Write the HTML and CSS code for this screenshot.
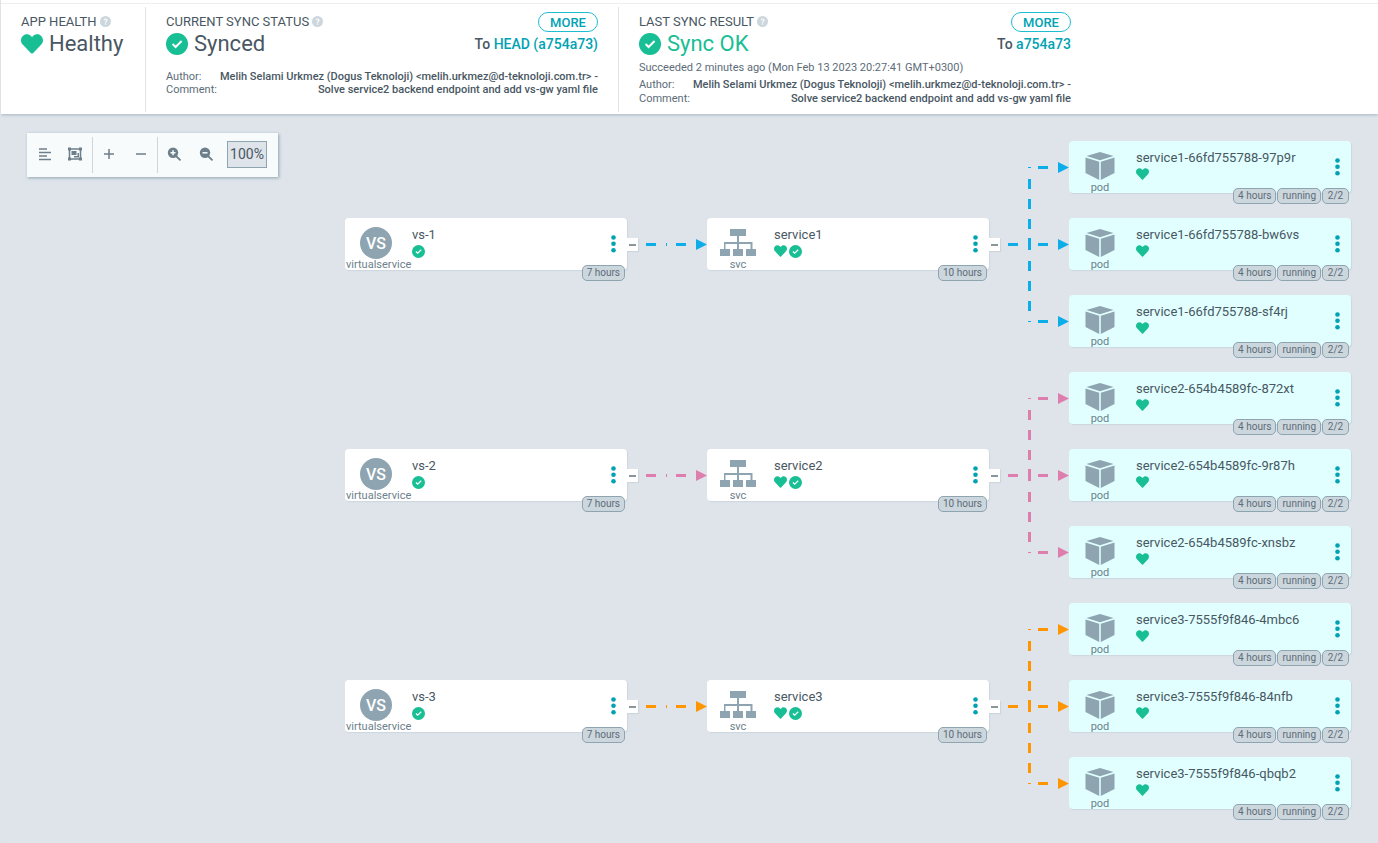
FILE: index.html
```html
<!DOCTYPE html>
<html lang="en">
<head>
<meta charset="utf-8">
<title>Application details</title>
<link rel="stylesheet" href="styles.css">
</head>
<body>
<svg class="sprite" aria-hidden="true">
  <symbol id="heart" viewBox="0 24 512 464"><path d="M462.3 62.6C407.5 15.9 326 24.3 275.7 76.2L256 96.5l-19.7-20.3C186.1 24.3 104.5 15.9 49.7 62.6c-62.8 53.6-66.1 149.8-9.9 207.9l193.5 199.8c12.5 12.9 32.8 12.9 45.3 0l193.5-199.8c56.3-58.1 53-154.3-9.8-207.9z"/></symbol>
  <symbol id="check" viewBox="0 0 22 22"><circle cx="11" cy="11" r="11"/><path d="M6.6 11l3 3 6-6" fill="none" stroke="#fff" stroke-width="2"/></symbol>
  <symbol id="help" viewBox="0 0 12 12"><circle cx="6" cy="6" r="6"/><path d="M4.4 4.7c.2-2 3.3-1.900 3.300 0C7.700 5.800 6 5.700 6 7.100" fill="none" stroke="#fff" stroke-width="1.200"/><circle cx="6" cy="8.800" r=".8" fill="#fff"/></symbol>
  <symbol id="dots" viewBox="0 0 5 18"><circle cx="2.500" cy="2.500" r="2.300"/><circle cx="2.500" cy="8.800" r="2.300"/><circle cx="2.500" cy="15.200" r="2.300"/></symbol>
  <symbol id="tree" viewBox="0 0 36 28"><path d="M10 0h16v7h-7v6h13.500v7H36v7H26v-7h4.500v-5H19v5h4v7H13v-7h4v-5H5.500v5H10v7H0v-7h4v-7h13V7h-7z"/></symbol>
  <symbol id="cube" viewBox="0 0 30 28"><path d="M15 0l13.500 4L15 8.200 1.500 4zM.5 5.600l13.700 4.200V28L.5 21zM29.500 5.600L15.800 9.800V28l13.700-7z"/></symbol>
  <symbol id="one" viewBox="0 0 80 52"><path d="M19 25h10v3H19zM39 25h1v3h-1zM49 25h10v3H49zM69 21l11 5.500L69 32z"/></symbol>
  <symbol id="fan" viewBox="0 0 80 206"><path d="M19 102h10v3H19zM39 97h3v12h-3zM39 38h3v10h-3zM39 58h3v10h-3zM39 78h3v10h-3zM39 120h3v10h-3zM39 140h3v10h-3zM39 160h3v10h-3zM39 26h3v1h-3zM39 180h3v1h-3zM49 25h10v3H49zM49 102h10v3H49zM49 179h10v3H49zM69 21l11 5.500L69 32zM69 98l11 5.500L69 109zM69 175l11 5.500L69 186z"/></symbol>
</svg>

<header class="status">
  <section class="panel first">
    <h2 class="title">APP HEALTH <svg class="help"><use href="#help"/></svg></h2>
    <p class="state"><svg class="state-heart"><use href="#heart"/></svg> Healthy</p>
  </section>
  <section class="panel wide">
    <div class="line"><h2 class="title">CURRENT SYNC STATUS <svg class="help"><use href="#help"/></svg></h2><button class="more">MORE</button></div>
    <div class="line"><p class="state"><svg class="state-check"><use href="#check"/></svg> Synced</p><p class="target">To <a href="#head">HEAD (a754a73)</a></p></div>
    <dl class="commit commit-low">
      <dt>Author:</dt><dd>Melih Selami Urkmez (Dogus Teknoloji) &lt;melih.urkmez@d-teknoloji.com.tr&gt; -</dd>
      <dt>Comment:</dt><dd>Solve service2 backend endpoint and add vs-gw yaml file</dd>
    </dl>
  </section>
  <section class="panel wide">
    <div class="line"><h2 class="title">LAST SYNC RESULT <svg class="help"><use href="#help"/></svg></h2><button class="more">MORE</button></div>
    <div class="line"><p class="state ok"><svg class="state-check"><use href="#check"/></svg> Sync OK</p><p class="target">To <a href="#rev">a754a73</a></p></div>
    <p class="when">Succeeded 2 minutes ago (Mon Feb 13 2023 20:27:41 GMT+0300)</p>
    <dl class="commit">
      <dt>Author:</dt><dd>Melih Selami Urkmez (Dogus Teknoloji) &lt;melih.urkmez@d-teknoloji.com.tr&gt; -</dd>
      <dt>Comment:</dt><dd>Solve service2 backend endpoint and add vs-gw yaml file</dd>
    </dl>
  </section>
</header>

<main class="canvas">
  <div class="toolbar">
    <div class="tools">
      <button aria-label="Compact"><svg viewBox="0 0 16 16"><path d="M2 3h8M2 6.500h12M2 10h8M2 13.500h12" stroke-width="1.600"/></svg></button>
      <button aria-label="Group nodes"><svg viewBox="0 0 16 16"><path d="M2.500 3h11v10h-11z" stroke-width="1.500"/><path class="solid" d="M1 1.500h3v3H1zM12 1.500h3v3h-3zM1 11.500h3v3H1zM12 11.500h3v3h-3zM4.500 5h5v4h-5zM10.500 7H12v4.500H7V10h3.500z"/></svg></button>
    </div>
    <div class="tools">
      <button aria-label="Expand all"><svg viewBox="0 0 16 16"><path d="M3 8h10M8 3v10" stroke-width="1.500"/></svg></button>
      <button aria-label="Collapse all"><svg viewBox="0 0 16 16"><path d="M3 8h10" stroke-width="1.500"/></svg></button>
    </div>
    <div class="tools">
      <button aria-label="Zoom in"><svg viewBox="0 0 16 16"><circle class="solid" cx="7" cy="6.800" r="5.200"/><path d="M10 10l4.500 4.300" stroke-width="1.800"/><path class="mark" d="M4.500 6.800h5M7 4.300v5"/></svg></button>
      <button aria-label="Zoom out"><svg viewBox="0 0 16 16"><circle class="solid" cx="7" cy="6.800" r="5.200"/><path d="M10 10l4.500 4.300" stroke-width="1.800"/><path class="mark" d="M4.500 6.800h5"/></svg></button>
      <input class="zoom" type="text" value="100%" aria-label="Zoom level">
    </div>
  </div>

  <div class="graph" id="graph"></div>
</main>
<script src="graph.js"></script>
</body>
</html>
```

FILE: graph.js
```js
const groups = [
  { tone: "blue", vs: "vs-1", svc: "service1", pods: ["service1-66fd755788-97p9r", "service1-66fd755788-bw6vs", "service1-66fd755788-sf4rj"] },
  { tone: "pink", vs: "vs-2", svc: "service2", pods: ["service2-654b4589fc-872xt", "service2-654b4589fc-9r87h", "service2-654b4589fc-xnsbz"] },
  { tone: "orange", vs: "vs-3", svc: "service3", pods: ["service3-7555f9f846-4mbc6", "service3-7555f9f846-84nfb", "service3-7555f9f846-qbqb2"] }
];

const use = (id, cls) => `<svg class="${cls}"><use href="#${id}"/></svg>`;

const node = ({ name, kind, icon, marks, tags, pod }) => `
  <article class="node${pod ? " pod" : ""}">
    <div class="kind">${icon}<span>${kind}</span></div>
    <div class="info"><span class="name">${name}</span><span class="marks">${marks}</span></div>
    <button class="menu" aria-label="Actions for ${name}">${use("dots", "dots")}</button>
    <div class="tags">${tags.map(t => `<span>${t}</span>`).join("")}</div>
    ${pod ? "" : `<button class="fold" aria-label="Collapse ${name}"></button>`}
  </article>`;

document.getElementById("graph").innerHTML = groups.map(g => `
  <section class="group ${g.tone}">
    ${node({ name: g.vs, kind: "virtualservice", icon: '<b class="vs">VS</b>', marks: use("check", "mark-check"), tags: ["7 hours"] })}
    ${use("one", "edge")}
    ${node({ name: g.svc, kind: "svc", icon: use("tree", "tree"), marks: use("heart", "mark-heart") + use("check", "mark-check"), tags: ["10 hours"] })}
    ${use("fan", "edge fan")}
    <div class="pods">
      ${g.pods.map(p => node({ name: p, kind: "pod", icon: use("cube", "cube"), marks: use("heart", "mark-heart"), tags: ["4 hours", "running", "2/2"], pod: true })).join("")}
    </div>
  </section>`).join("");
```

FILE: styles.css
```css
* { box-sizing: border-box; }

body {
  display: flex;
  flex-direction: column;
  min-height: 100vh;
  margin: 0;
  border-left: 1px solid #dfe3e6;
  background: #dee4ea;
  color: #495763;
  font-family: Roboto, "Liberation Sans", sans-serif;
  font-size: 13px;
}

h2, p, dl, dd { margin: 0; }
button { margin: 0; padding: 0; border: 0; background: none; font: inherit; cursor: pointer; }
svg { display: block; flex: none; }
.sprite { position: absolute; width: 0; height: 0; }

/* Status bar */
.status {
  position: relative;
  display: flex;
  padding: 7px 0 2px;
  background: linear-gradient(#fff 3px, #eceeef 3px, #eceeef 4px, #fff 4px);
  box-shadow: 0 1px 3px #a9b7c2;
}
.panel { min-height: 105px; padding: 4px 20px 0; border-right: 1px solid #dee4ea; }
.panel:last-child { border-right: 0; }
.first { width: 145px; }
.wide { width: 473px; }
.wide:last-child { width: 472px; }
.line { display: flex; justify-content: space-between; }
.title {
  display: flex;
  align-items: center;
  gap: 3px;
  height: 21px;
  font-size: 13px;
  font-weight: 400;
  white-space: nowrap;
}
.help { width: 11px; height: 11px; fill: #ccd6dd; }
.state { display: flex; align-items: center; gap: 6px; height: 24px; font-size: 22px; line-height: 24px; white-space: nowrap; }
.state.ok { color: #18be94; }
.state-heart { width: 22px; height: 20px; fill: #18be94; }
.state-check { width: 22px; height: 22px; fill: #18be94; }
.more {
  width: 60px;
  height: 20px;
  margin-top: 1px;
  border: 1px solid #1fbdd0;
  border-radius: 10px;
  color: #00a2b3;
  font-size: 13px;
  font-weight: 500;
}
.target { font-size: 14px; font-weight: 500; line-height: 24px; }
.target a { color: #00a2b3; text-decoration: none; }
.when { margin-top: 5px; color: #5c6c78; font-size: 11px; line-height: 14px; }
.commit {
  display: grid;
  grid-template-columns: auto 1fr;
  margin-top: 3px;
  font-size: 11px;
  line-height: 14px;
  white-space: nowrap;
}
.commit-low { margin-top: 14px; line-height: 13px; }
.commit dt { width: 0; color: #5c6c78; }
.commit dd { font-weight: 500; text-align: right; }

/* Canvas */
.canvas { position: relative; flex: 1; padding: 27px 26px 33px 344px; }

.toolbar {
  position: absolute;
  top: 19px;
  left: 26px;
  display: flex;
  height: 44px;
  padding: 4px 11px 4px 3px;
  background: #f8fbfc;
  box-shadow: 1px 1px 3px #8fa4b1;
}
.tools { display: flex; align-items: center; padding-bottom: 2px; }
.tools + .tools { border-left: 1px solid #ccd6dd; }
.tools button { width: 32px; height: 32px; }
.tools:first-child { padding-right: 2px; }
.tools:first-child button { width: 30px; }
.tools svg { width: 16px; height: 16px; margin: auto; fill: none; stroke: #6d7f8b; }
.tools .solid { fill: #6d7f8b; stroke: none; }
.tools .mark { stroke: #f8fbfc; stroke-width: 1.5; }
.zoom {
  width: 40px;
  height: 27px;
  margin-left: 5px;
  padding: 0;
  border: 1px solid #8fa4b1;
  background: #dee4ea;
  color: #495763;
  font: 14px Roboto, "Liberation Sans", sans-serif;
  text-align: center;
}

/* Resource tree */
.graph { display: flex; flex-direction: column; gap: 25px; }
.group { display: flex; align-items: center; }
.blue { --tone: #0dadea; }
.pink { --tone: #de7eae; }
.orange { --tone: #ff9500; }
.edge { width: 80px; height: 52px; fill: var(--tone); }
.fan { height: 206px; }
.pods { display: flex; flex-direction: column; gap: 25px; }

.node {
  position: relative;
  display: flex;
  flex: none;
  width: 282px;
  height: 52px;
  padding: 0 11px 0 1px;
  border-radius: 4px;
  background: #fff;
  box-shadow: 1px 1px 1px #ccd6dd;
}
.pod { background: #e0fffe; }
.kind { width: 60px; padding-top: 9px; color: #6d7f8b; font-size: 11px; line-height: 11px; text-align: center; white-space: nowrap; }
.vs, .tree, .cube { height: 32px; margin: 0 auto; fill: #8fa4b1; }
.vs {
  display: block;
  width: 32px;
  border-radius: 50%;
  background: #8fa4b1;
  color: #fff;
  font-size: 16px;
  font-weight: 500;
  line-height: 34px;
}
.tree { width: 36px; padding: 2px 0; }
.cube { width: 30px; padding: 2px 0; }
.info { display: flex; flex: 1; flex-direction: column; padding: 9px 0 0 6px; white-space: nowrap; }
.name { line-height: 16px; }
.marks { display: flex; align-items: center; gap: 2px; height: 16px; fill: #18be94; }
.mark-heart { width: 13px; height: 12px; }
.mark-check { width: 13px; height: 13px; }
.menu { width: 5px; }
.dots { width: 5px; height: 18px; fill: #00a2b3; }
.tags {
  position: absolute;
  right: 2px;
  bottom: -11px;
  display: flex;
  gap: 1px;
}
.tags span {
  min-width: 27px;
  padding: 0 4px;
  border: 1px solid #8fa4b1;
  border-radius: 5px;
  background: #ccd6dd;
  color: #5c6c78;
  font-size: 10px;
  line-height: 14px;
  text-align: center;
}
.fold {
  position: absolute;
  top: 20px;
  left: 100%;
  display: flex;
  align-items: center;
  justify-content: center;
  width: 11px;
  height: 13px;
  background: #fff;
  box-shadow: 1px 1px 1px #ccd6dd;
}
.fold::before { content: ""; width: 7px; height: 2px; background: #8b959c; }
```
